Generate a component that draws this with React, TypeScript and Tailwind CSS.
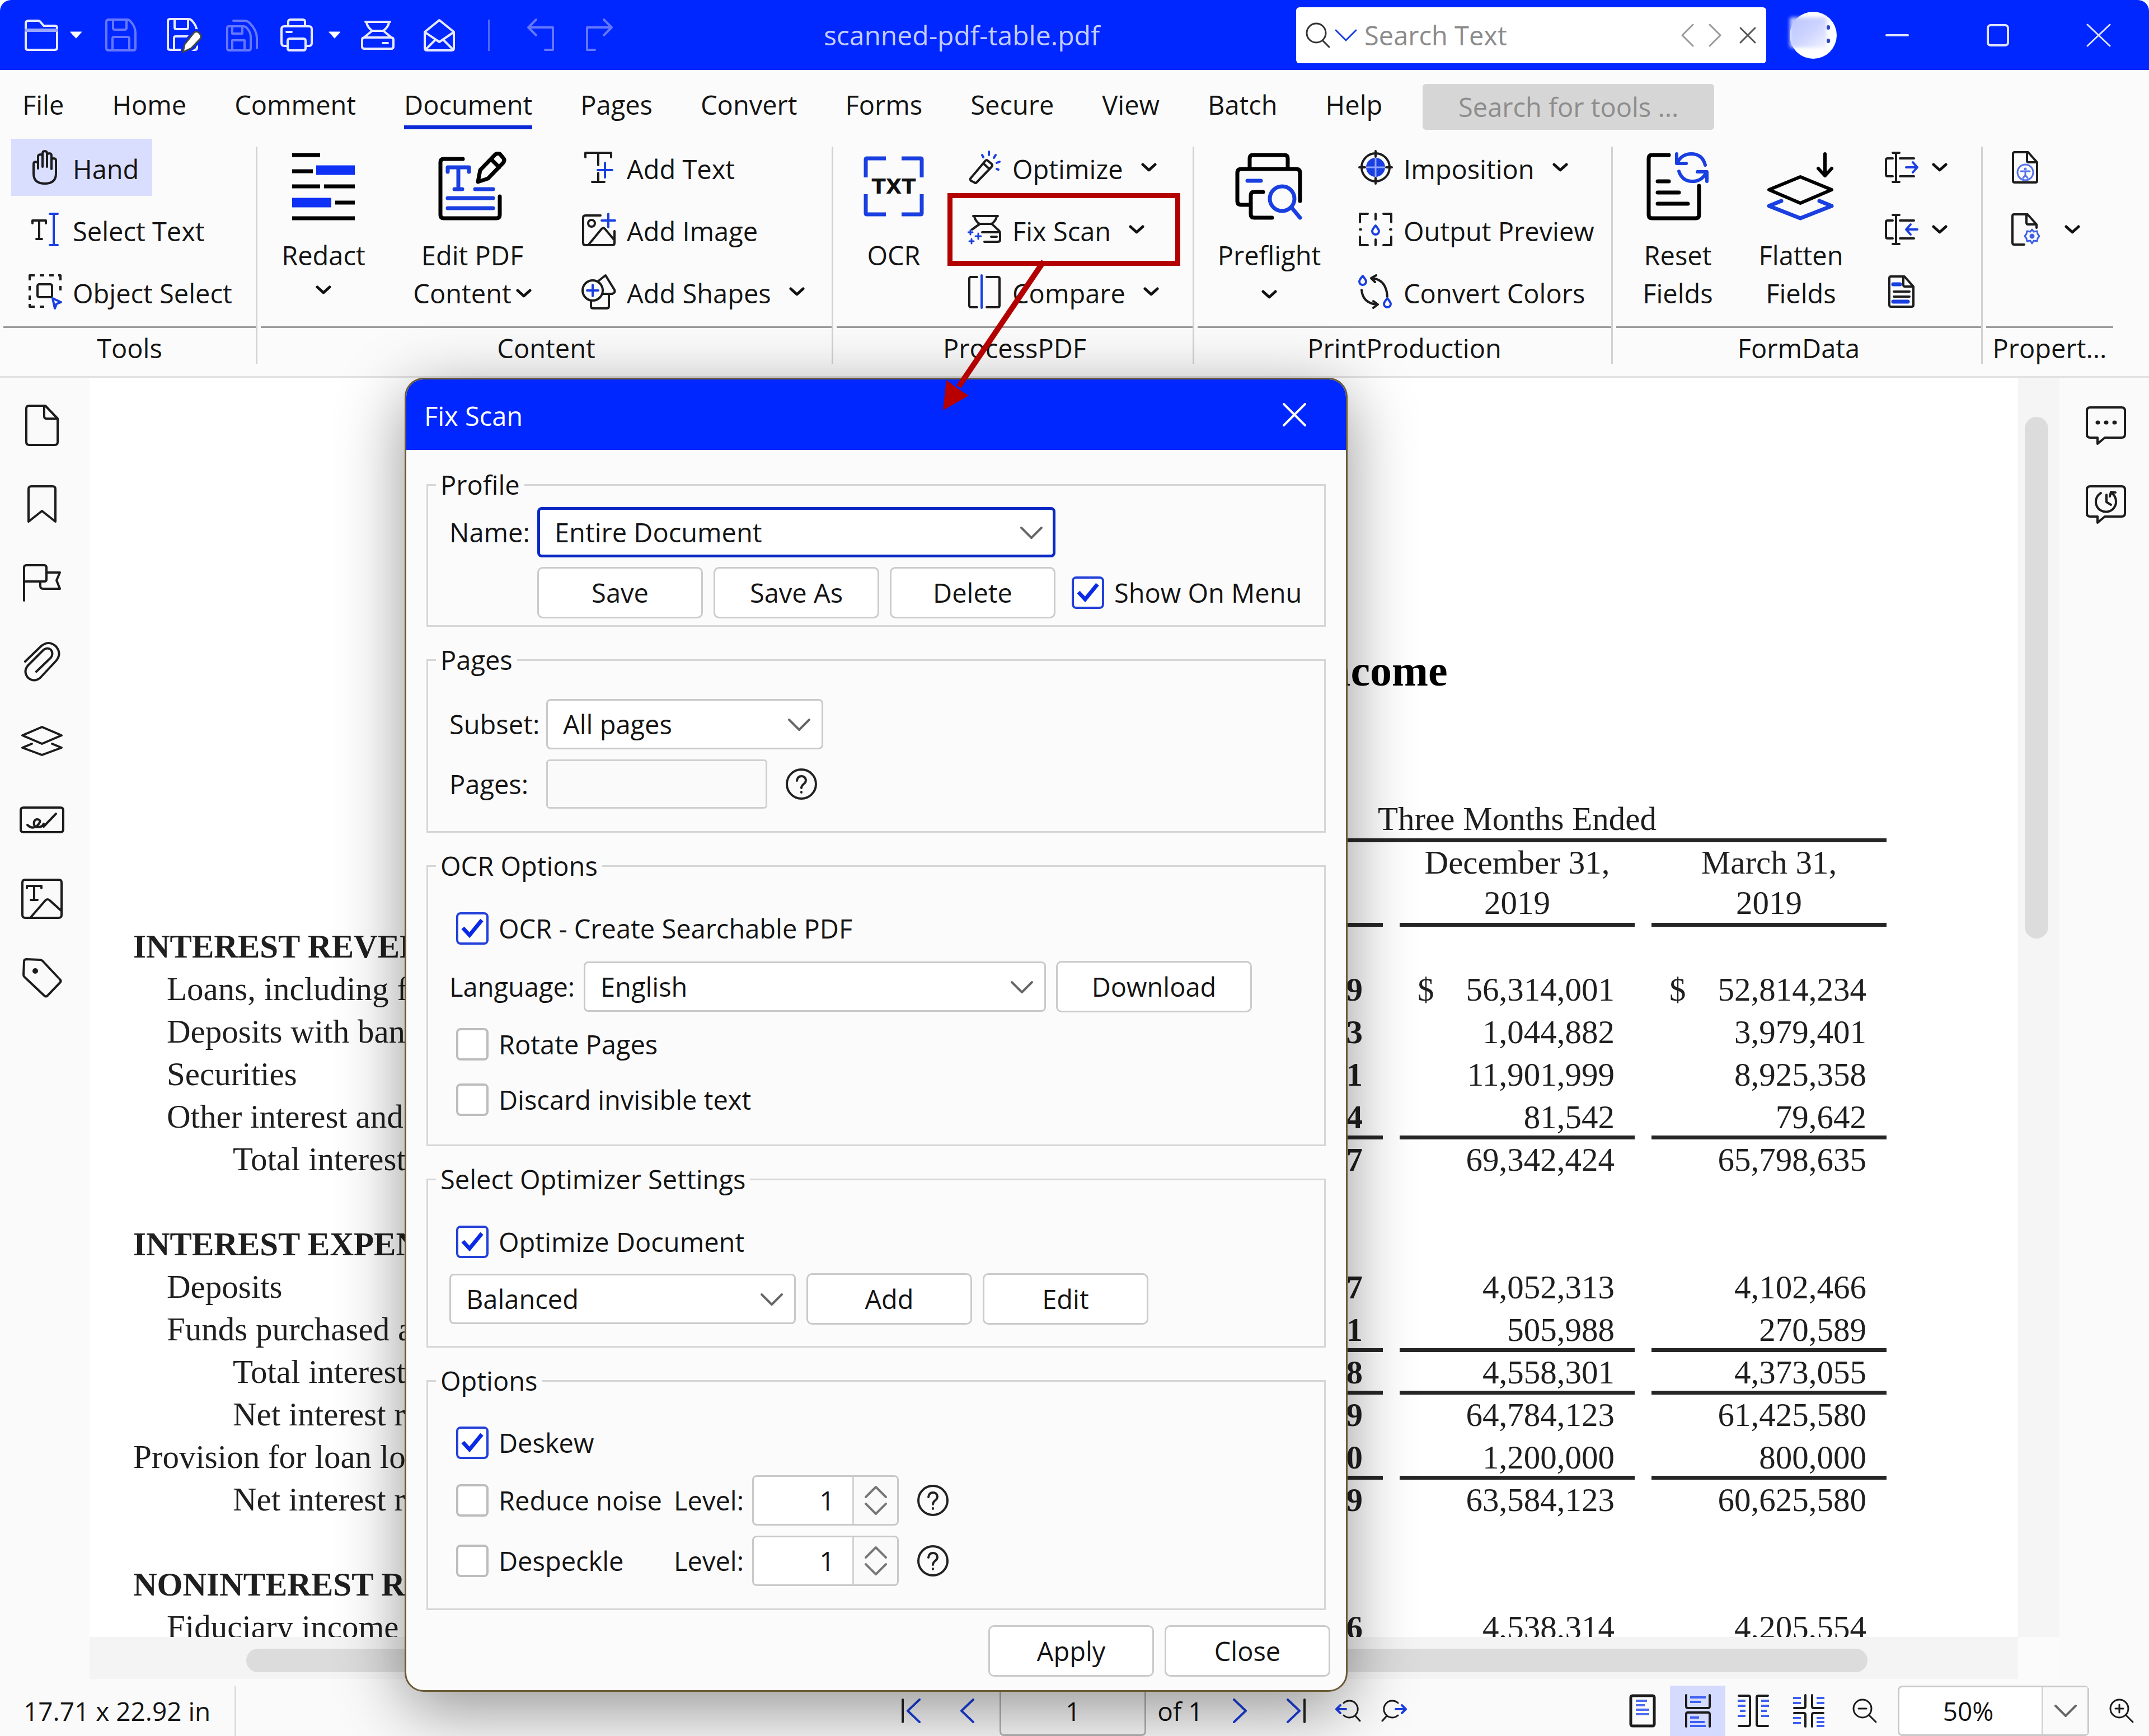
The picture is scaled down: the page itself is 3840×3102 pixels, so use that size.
import React from "react";

const BLUE = "#1a3fe0";
const INK = "#1c1c1c";

type IconProps = {
  w: number;
  h: number;
  sw?: number;
  color?: string;
  children: React.ReactNode;
};

function Icon({ w, h, sw = 4, color = INK, children }: IconProps) {
  return (
    <svg
      width={w}
      height={h}
      viewBox={`0 0 ${w} ${h}`}
      fill="none"
      stroke={color}
      strokeWidth={sw}
      strokeLinecap="round"
      strokeLinejoin="round"
      className="block shrink-0"
      aria-hidden="true"
    >
      {children}
    </svg>
  );
}

function Chevron({ w = 28, h = 16, sw = 5, color = "#111" }: { w?: number; h?: number; sw?: number; color?: string }) {
  return (
    <Icon w={w} h={h} sw={sw} color={color}>
      <path d={`M3 3L${w / 2} ${h - 3}L${w - 3} 3`} />
    </Icon>
  );
}

/* ---------- title bar ---------- */

const floppy = (
  <>
    <path d="M6 3h34q4 0 7 4q8 9 8 20v27q0 4-4 4H7q-4 0-4-4V7q0-4 4-4z" />
    <path d="M15 4v14q0 3 3 3h18q3 0 3-3V4M14 57V37q0-3 3-3h24q3 0 3 3v20" />
  </>
);

function TitleBar() {
  const b = "flex h-full items-center justify-center";
  return (
    <header className="flex h-[125px] shrink-0 items-center rounded-t-[20px] bg-[#0027ff]">
      <div className="flex h-full items-center pl-8">
        <button aria-label="Open" className={`${b} w-[84px]`}>
          <Icon w={62} h={58} color="#e6e9ff">
            <path d="M3 8q0-5 5-5h17q3 0 5 3l5 6h20q4 0 4 4v35q0 4-4 4H7q-4 0-4-4z" />
            <path d="M4 20h54" stroke="#9aa6ff" strokeWidth="6" />
          </Icon>
        </button>
        <button aria-label="Open recent" className={`${b} w-[40px]`}>
          <Icon w={22} h={14} sw={1} color="#fff"><path d="M1 1h20L11 12z" fill="#fff" /></Icon>
        </button>
        <button aria-label="Save" className={`${b} w-[120px]`}>
          <Icon w={58} h={61} color="#6677ff">{floppy}</Icon>
        </button>
        <button aria-label="Save as" className={`${b} w-[106px]`}>
          <Icon w={64} h={64} color="#e6e9ff">
            {floppy}
            <path d="M30 62l3-14 16-20q5-5 10 0t2 10L45 55z" fill="#fff" stroke="#0027ff" strokeWidth="9" />
            <path d="M30 62l3-14 16-20q5-5 10 0t2 10L45 55z" fill="#fff" stroke="#444" strokeWidth="3" />
          </Icon>
        </button>
        <button aria-label="Save all" className={`${b} w-[102px]`}>
          <Icon w={60} h={60} color="#6677ff">
            <path d="M6 14h26q4 0 7 4 6 7 6 15v20q0 4-4 4H6q-3 0-3-4V17q0-3 3-3z" />
            <path d="M12 15v12h18V15M12 56V39h22v17M14 4h20q5 0 9 4 13 13 13 27v18" />
          </Icon>
        </button>
        <button aria-label="Print" className={`${b} w-[92px]`}>
          <Icon w={60} h={61} color="#e6e9ff">
            <path d="M15 15V7q0-4 4-4h22q4 0 4 4v8M14 50H8q-5 0-5-5V20q0-5 5-5h44q5 0 5 5v25q0 5-5 5h-6M12 25h9" />
            <path d="M18 37h24q4 0 4 4v13q0 4-4 4H18q-4 0-4-4V41q0-4 4-4z" />
          </Icon>
        </button>
        <button aria-label="Print options" className={`${b} w-[44px]`}>
          <Icon w={22} h={14} sw={1} color="#fff"><path d="M1 1h20L11 12z" fill="#fff" /></Icon>
        </button>
        <button aria-label="Scan" className={`${b} w-[110px]`}>
          <Icon w={62} h={54} color="#e6e9ff">
            <path d="M9 3h44M11 4q1 8 10 15M51 4q-1 8-10 15M21 19h20M21 19L4 33M41 19l17 14M7 31h48q4 0 4 4v12q0 4-4 4H7q-4 0-4-4V35q0-4 4-4zM40 41h9" />
          </Icon>
        </button>
        <button aria-label="Email" className={`${b} w-[110px]`}>
          <Icon w={60} h={60} color="#e6e9ff">
            <path d="M4 24L30 3l26 21v29q0 4-4 4H8q-4 0-4-4zM5 25l25 17 25-17M6 55l17-17M54 55L37 38" />
          </Icon>
        </button>
        <span className="ml-8 h-14 w-[3px] bg-[#5268ff]" />
        <button aria-label="Undo" className={`${b} ml-9 w-[110px]`}>
          <Icon w={52} h={62} color="#6677ff"><path d="M18 3L4 17l14 14M4 17h44v40H34" /></Icon>
        </button>
        <button aria-label="Redo" className={`${b} w-[100px]`}>
          <Icon w={52} h={62} color="#6677ff"><path d="M34 3l14 14-14 14M48 17H4v40h14" /></Icon>
        </button>
      </div>
      <h1 className="flex-1 text-center text-[48px] leading-[64px] text-[#c3ccff]">scanned-pdf-table.pdf</h1>
      <div className="flex h-[100px] w-[840px] items-center rounded-[6px] bg-white pl-4">
        <Icon w={46} h={48} sw={3} color="#333"><circle cx="20" cy="20" r="17" /><path d="M32 34l11 11" /></Icon>
        <span className="ml-1.5"><Chevron w={42} h={24} sw={3} color={BLUE} /></span>
        <input
          aria-label="Search Text"
          placeholder="Search Text"
          className="ml-3 min-w-0 flex-1 bg-transparent outline-none placeholder:text-[#8b8b8b]"
        />
        <button aria-label="Previous result" className="mr-6">
          <Icon w={26} h={42} sw={3} color="#999"><path d="M23 2L4 21l19 19" /></Icon>
        </button>
        <button aria-label="Next result" className="mr-7">
          <Icon w={26} h={42} sw={3} color="#999"><path d="M3 2l19 19L3 40" /></Icon>
        </button>
        <button aria-label="Clear search" className="mr-4">
          <Icon w={34} h={34} sw={3} color="#555"><path d="M4 4l26 26M30 4L4 30" /></Icon>
        </button>
      </div>
      <div className="relative mr-[18px] ml-[42px] size-[84px] rounded-full bg-white">
        <span className="absolute top-2.5 left-0 h-[54px] w-[66px] rounded-sm bg-linear-to-br from-[#bcc6ff] via-[#ccd3ff] to-[#f1f3ff] blur-[3px]" />
        <span className="absolute top-6 right-3 h-2 w-1.5 rounded-full bg-[#2f45c8]" />
        <span className="absolute top-12 right-3 h-2 w-1.5 rounded-full bg-[#2f45c8]" />
      </div>
      <button aria-label="Minimize" className={`${b} w-[180px]`}>
        <Icon w={42} h={6} color="#dfe4ff"><path d="M2 3h38" /></Icon>
      </button>
      <button aria-label="Maximize" className={`${b} w-[180px]`}>
        <Icon w={42} h={42} color="#dfe4ff"><rect x="3" y="3" width="36" height="36" rx="5" /></Icon>
      </button>
      <button aria-label="Close window" className={`${b} w-[180px]`}>
        <Icon w={44} h={42} sw={3} color="#dfe4ff"><path d="M2 2l40 38M42 2L2 40" /></Icon>
      </button>
    </header>
  );
}

/* ---------- menu tabs ---------- */

const tabs = ["File", "Home", "Comment", "Document", "Pages", "Convert", "Forms", "Secure", "View", "Batch", "Help"];

function MenuTabs() {
  return (
    <nav className="flex h-[115px] shrink-0 items-center pl-10">
      <div className="flex gap-[86px] pt-1.5">
        {tabs.map((t) => (
          <button
            key={t}
            className={
              t === "Document"
                ? "border-b-[7px] border-[#0b2ad6] pt-2.5 leading-[74px]"
                : "border-b-[7px] border-transparent pt-2.5 leading-[74px]"
            }
          >
            {t}
          </button>
        ))}
      </div>
      <input
        aria-label="Search for tools"
        placeholder="Search for tools ..."
        className="mt-4 ml-[72px] h-[82px] w-[521px] rounded-[6px] bg-[#d6d6d6] text-center outline-none placeholder:text-[#8d8d8d]"
      />
    </nav>
  );
}

/* ---------- ribbon ---------- */

function Tool({
  icon,
  label,
  name,
  chevron,
  active,
  children,
}: {
  icon: React.ReactNode;
  label?: string;
  name?: string;
  chevron?: boolean;
  active?: boolean;
  children?: React.ReactNode;
}) {
  return (
    <button
      aria-label={label ? undefined : name}
      className={
        active
          ? "relative flex h-[102px] items-center self-start bg-[#d9deff] pr-6 pl-[30px] whitespace-nowrap"
          : "relative flex h-[102px] items-center self-start pl-[30px] whitespace-nowrap"
      }
    >
      <span className="flex w-[60px] justify-center">{icon}</span>
      {label && <span className="ml-5 pt-1.5">{label}</span>}
      {chevron && <span className={label ? "ml-8" : "ml-6"}><Chevron /></span>}
      {children}
    </button>
  );
}

function BigTool({ icon, children, width }: { icon: React.ReactNode; children: React.ReactNode; width: string }) {
  return (
    <button className={`flex flex-col items-center self-start pt-[23px] ${width}`}>
      <span className="flex h-[124px] items-center">{icon}</span>
      <span className="mt-[27px] flex flex-col items-center leading-[68px]">{children}</span>
    </button>
  );
}

function Group({ title, children, pad, last }: { title: string; children: React.ReactNode; pad: string; last?: boolean }) {
  return (
    <section aria-label={title} className={last ? "mr-[64px] flex min-w-0" : "flex min-w-0"}>
      <div className="flex min-w-0 flex-1 flex-col pl-1.5">
        <div className={`flex h-[346px] border-b-[3px] border-[#9c9c9c] pt-2 ${pad}`}>{children}</div>
        <div className="h-[72px] text-center leading-[72px] whitespace-nowrap">{title}</div>
      </div>
      {!last && <span className="mt-[22px] mb-2 w-[3px] bg-[#d2d2d2]" />}
    </section>
  );
}

const list = "flex flex-col gap-[9px]";

function formFieldIcon(arrow: string) {
  return (
    <Icon w={60} h={60}>
      <path d="M14 4h12M20 4v52M14 56h12M14 14H5q-3 0-3 3v26q0 3 3 3h9M27 14h25M27 46h25" />
      <path d={arrow} stroke={BLUE} />
    </Icon>
  );
}

function Ribbon() {
  return (
    <div className="grid shrink-0 grid-cols-[460fr_1029fr_645fr_748fr_661fr_297fr] border-b-[3px] border-[#e2e2e2] pb-3.5">
      <Group title="Tools" pad="pl-3.5">
        <div className={list}>
          <Tool
            active
            label="Hand"
            icon={
              <Icon w={50} h={66}>
                <path d="M5 38V27q0-4 4-4t4 4v8V14q0-4 4-4t4 4v18V8q0-4 4-4t4 4v24V12q0-4 4-4t4 4v24V21q0-4 4-4t4 4v23q0 18-20 18T5 44z" />
              </Icon>
            }
          />
          <Tool
            label="Select Text"
            icon={
              <Icon w={52} h={62}>
                <path d="M4 20v-5h24v5M16 15v33M11 48h10" />
                <path d="M35 3h14M42 3v56M35 59h14" stroke={BLUE} />
              </Icon>
            }
          />
          <Tool
            label="Object Select"
            icon={
              <Icon w={62} h={64}>
                <path d="M4 12V3h9M22 3h8M39 3h8M55 3h4v9M59 22v8M4 22v8M4 39v8M4 54v5h9M22 59h8" strokeLinecap="butt" />
                <rect x="18" y="19" width="26" height="23" rx="3" />
                <path d="M45 44l15 7-8 3-3 8z" stroke={BLUE} />
              </Icon>
            }
          />
        </div>
      </Group>

      <Group title="Content" pad="pl-3 gap-[22px]">
        <BigTool
          width="w-[200px]"
          icon={
            <Icon w={112} h={122} sw={7} color="#000">
              <path d="M0 5h50M0 34h37M0 61h50M57 61h55M77 90h35M0 118h112" strokeLinecap="butt" />
              <path d="M43 32h69M0 90h70" stroke="#0f30f5" strokeWidth="17" strokeLinecap="butt" />
            </Icon>
          }
        >
          <span>Redact</span>
          <span className="pt-5"><Chevron /></span>
        </BigTool>
        <BigTool
          width="w-[288px]"
          icon={
            <Icon w={122} h={124} sw={7} color="#000">
              <path d="M44 13H10q-6 0-6 6v94q0 6 6 6h94q6 0 6-6V80" />
              <path d="M71 54l4-21 27-28q5-4 9 0l5 6q4 4 0 9L89 48zM95 14l14 14" />
              <path d="M17 36v-8h38v8M36 28v38M29 67h14M66 67h32M17 83h81M17 101h81" stroke={BLUE} />
            </Icon>
          }
        >
          <span>Edit PDF</span>
          <span className="flex items-center gap-2">Content<Chevron /></span>
        </BigTool>
        <div className={list}>
          <Tool
            label="Add Text"
            icon={
              <Icon w={56} h={60}>
                <path d="M4 12V4h46v8M27 4v22M27 40v15M16 56h22" />
                <path d="M39 22v26M26 35h26" stroke={BLUE} />
              </Icon>
            }
          />
          <Tool
            label="Add Image"
            icon={
              <Icon w={62} h={62}>
                <path d="M34 6H7q-4 0-4 4v45q0 4 4 4h48q4 0 4-4V34M12 59l24-29q3-3 6 0l15 18" />
                <circle cx="18" cy="20" r="6" />
                <path d="M48 3v24M36 15h24" stroke={BLUE} />
              </Icon>
            }
          />
          <Tool
            label="Add Shapes"
            chevron
            icon={
              <Icon w={64} h={64}>
                <circle cx="21" cy="30" r="18" />
                <path d="M30 14L44 3l16 26q2 5-4 7H40M18 49v9q0 4 4 4h24q4 0 4-4V37" />
                <path d="M21 20v20M11 30h20" stroke={BLUE} />
              </Icon>
            }
          />
        </div>
      </Group>

      <Group title="ProcessPDF" pad="pl-3 gap-3">
        <BigTool
          width="w-[180px]"
          icon={
            <svg width="108" height="108" viewBox="0 0 108 108" fill="none" aria-hidden="true">
              <path
                d="M4 38V6q0-2 2-2h34M68 4h34q2 0 2 2v32M104 68v34q0 2-2 2H68M40 104H6q-2 0-2-2V68"
                stroke={BLUE}
                strokeWidth="7"
              />
              <text x="54" y="67" textAnchor="middle" className="font-['DejaVu_Sans'] text-[37px] font-bold" fill="#111">
                TXT
              </text>
            </svg>
          }
        >
          <span>OCR</span>
        </BigTool>
        <div className={list}>
          <Tool
            label="Optimize"
            chevron
            icon={
              <Icon w={60} h={60}>
                <path d="M5 50l27-32q2-2 4 0l7 6q2 2 0 5L16 57q-2 2-4 0l-6-3q-2-2-1-4zM28 23l10 9" />
                <path d="M26 8l2 4M38 2v6M50 8l-3 5M57 20l-5 2M52 33l3 1" stroke={BLUE} />
              </Icon>
            }
          />
          <Tool
            label="Fix Scan"
            chevron
            icon={
              <Icon w={60} h={54}>
                <path d="M10 3h44M12 4q2 8 9 13M52 4q-2 8-9 13M22 17h21M22 17L8 27M43 17l13 12q2 2 2 5v11q0 4-4 4H30M26 32h30M42 40h10" />
                <path d="M5 28v8M1 32h8M19 34v10M14 39h10M7 44v8M3 48h8" stroke={BLUE} strokeWidth="3" />
              </Icon>
            }
          >
            <span className="absolute -top-[14px] -left-[6px] z-40 h-[130px] w-[416px] border-[9px] border-[#b30000]" />
            <svg
              className="absolute top-[108px] -left-[24px] z-40 overflow-visible"
              width="200"
              height="270"
              viewBox="0 0 200 270"
              aria-hidden="true"
            >
              <path d="M190 0L38 224" stroke="#b30000" strokeWidth="10" />
              <path d="M10 266L16 212L34 226L56 240Z" fill="#b80000" />
            </svg>
          </Tool>
          <Tool
            label="Compare"
            chevron
            icon={
              <Icon w={60} h={62}>
                <path d="M17 5H6q-3 0-3 3v48q0 3 3 3h11M34 5h20q3 0 3 3v48q0 3-3 3H34" />
                <path d="M25 2v58" stroke={BLUE} />
              </Icon>
            }
          />
        </div>
      </Group>

      <Group title="PrintProduction" pad="pl-3.5 gap-4">
        <BigTool
          width="w-[228px]"
          icon={
            <Icon w={122} h={120} sw={7} color="#000">
              <path d="M26 29V10q0-6 6-6h56q6 0 6 6v19M24 93H11q-7 0-7-7V36q0-7 7-7h98q7 0 7 7v50M50 70H34q-6 0-6 6v34q0 6 6 6h32" />
              <path d="M22 50h24M101 98l15 18" stroke={BLUE} />
              <circle cx="84" cy="82" r="22" stroke={BLUE} />
            </Icon>
          }
        >
          <span>Preflight</span>
          <span className="pt-7"><Chevron /></span>
        </BigTool>
        <div className={list}>
          <Tool
            label="Imposition"
            chevron
            icon={
              <Icon w={62} h={62}>
                <circle cx="31" cy="31" r="25" />
                <circle cx="31" cy="31" r="17" fill={BLUE} stroke="none" />
                <path d="M31 15v32M15 31h32" stroke="#8fa3ff" strokeWidth="3" />
                <path d="M31 2v10M31 50v10M2 31h10M50 31h10" />
              </Icon>
            }
          />
          <Tool
            label="Output Preview"
            icon={
              <Icon w={62} h={62}>
                <path d="M3 18V3h14M45 3h14v15M59 44v15H45M17 59H3V44M31 3v10M31 49v10M3 31h2M57 31h2" />
                <path d="M31 24q6 7 6 10a6 6 0 0 1-12 0q0-3 6-10z" stroke={BLUE} />
              </Icon>
            }
          />
          <Tool
            label="Convert Colors"
            icon={
              <Icon w={62} h={62}>
                <path d="M24 7q26 2 28 33M32 2l-9 5 7 7M6 28q2 24 28 26M27 48l8 6-8 6" />
                <path d="M8 3q6 7 6 10a6 6 0 0 1-12 0q0-3 6-10zM52 43q6 7 6 10a6 6 0 0 1-12 0q0-3 6-10z" stroke={BLUE} />
              </Icon>
            }
          />
        </div>
      </Group>

      <Group title="FormData" pad="pl-2.5 gap-5">
        <BigTool
          width="w-[200px]"
          icon={
            <Icon w={112} h={122} sw={7} color="#000">
              <path d="M40 5H10q-6 0-6 6v101q0 6 6 6h78q6 0 6-6V60M20 52h20M20 72h38M20 92h54" />
              <path d="M54 3v17h17M55 19q8-16 25-16 20 0 25 20M108 52V35H91M107 36q-8 16-25 16-18 0-24-18" stroke={BLUE} strokeWidth="6" />
            </Icon>
          }
        >
          <span>Reset</span>
          <span>Fields</span>
        </BigTool>
        <BigTool
          width="w-[200px]"
          icon={
            <Icon w={122} h={122} sw={6} color="#000">
              <path d="M104 3v38M92 29l12 13 12-13M60 44l56 23-56 24L4 67z" />
              <path d="M26 87L4 96l56 22 56-22-22-9" stroke={BLUE} strokeWidth="7" />
            </Icon>
          }
        >
          <span>Flatten</span>
          <span>Fields</span>
        </BigTool>
        <div className={list}>
          <Tool name="Export form data" chevron icon={formFieldIcon("M38 30h20M50 21l8 9-8 9")} />
          <Tool name="Import form data" chevron icon={formFieldIcon("M38 30h20M46 21l-8 9 8 9")} />
          <Tool
            name="Form report"
            icon={
              <Icon w={50} h={60}>
                <path d="M6 3h24l16 18v33q0 3-3 3H6q-3 0-3-3V6q0-3 3-3zM28 4v14q0 3 3 3h14M11 30h28M11 39h28" />
                <path d="M10 17h12M10 48h26" stroke={BLUE} strokeWidth="7" />
              </Icon>
            }
          />
        </div>
      </Group>

      <Group title="Propert..." pad="pl-2.5" last>
        <div className={list}>
          <Tool
            name="Document properties"
            icon={
              <Icon w={50} h={60}>
                <path d="M6 3h24l16 18v33q0 3-3 3H6q-3 0-3-3V6q0-3 3-3zM28 4v14q0 3 3 3h14" />
                <g stroke="#5571ee" strokeWidth="3">
                  <circle cx="25" cy="39" r="14" />
                  <circle cx="25" cy="33" r="1" />
                  <path d="M17 37h16M25 38v6l-4 5M25 44l4 5" />
                </g>
              </Icon>
            }
          />
          <button aria-label="Property settings" className="flex h-[102px] items-center gap-10 pl-[30px]">
            <span className="flex w-[60px] justify-center">
              <Icon w={52} h={60}>
                <path d="M24 57H6q-3 0-3-3V6q0-3 3-3h24l16 18v6M28 4v14q0 3 3 3h14" />
                <g stroke="#3f5fe8" strokeWidth="3">
                  <path d="M38 30l3 4 6-1 1 5 3 4-3 4-1 5-6-1-3 5-3-5-6 1-1-5-3-4 3-4 1-5 6 1z" />
                  <circle cx="38" cy="42" r="3" fill="#3f5fe8" />
                </g>
              </Icon>
            </span>
            <Chevron />
          </button>
        </div>
      </Group>
    </div>
  );
}

/* ---------- side panels ---------- */

const sideIcons: [string, React.ReactNode][] = [
  ["Thumbnails", <Icon w={62} h={76} key="a"><path d="M8 3h29l22 23v42q0 5-5 5H8q-5 0-5-5V8q0-5 5-5zM35 4v18q0 4 4 4h19" /></Icon>],
  ["Bookmarks", <Icon w={54} h={70} key="b"><path d="M3 66V8q0-5 5-5h38q5 0 5 5v58L27 47z" /></Icon>],
  ["Destinations", <Icon w={72} h={70} key="c"><path d="M4 66V7q0-4 4-4h32q4 0 4 4v21q0 4-4 4H4M44 16h24l-6 14 6 15H38q-5 0-5-5v-8" /></Icon>],
  ["Attachments", <Icon w={68} h={74} key="d"><path d="M4 36L32 9q14-12 27 0 11 13 0 26L31 65q-11 9-22 0-9-11 0-22l28-28q7-5 13 0 5 7 0 14L24 54" /></Icon>],
  ["Layers", <Icon w={76} h={56} key="e"><path d="M38 3l35 15-35 15L3 18zM20 33L3 40l35 13 35-13-17-7" /></Icon>],
  ["Signatures", <Icon w={82} h={50} key="f"><path d="M8 3h66q5 0 5 5v34q0 5-5 5H8q-5 0-5-5V8q0-5 5-5zM15 34q8 8 17 2 8-8 4-11-6-3-9 3-2 10 7 10 8 0 10-6M44 37L66 14" /></Icon>],
  ["Fields", <Icon w={76} h={74} key="g"><path d="M8 3h60q5 0 5 5v58q0 5-5 5H8q-5 0-5-5V8q0-5 5-5zM11 18v-4h26v4M24 14v25M18 39h12M18 70l26-30q4-4 8 0l20 18" /></Icon>],
  ["Tags", <Icon w={74} h={74} key="h"><path d="M5 8q0-4 4-4l24 1q3 0 5 2l31 33q3 3 0 6L47 69q-3 3-6 0L6 36q-2-2-2-4z" /><circle cx="25" cy="25" r="3" fill="#111" /></Icon>],
];

const sideButton = "flex h-[141px] w-[150px] items-center justify-center";

function LeftPanel() {
  return (
    <aside className="w-[160px] shrink-0 bg-[#fafafa] pt-3.5">
      {sideIcons.map(([name, icon]) => (
        <button key={name} aria-label={name} className={sideButton}>{icon}</button>
      ))}
    </aside>
  );
}

function RightPanel() {
  return (
    <aside className="w-[160px] shrink-0 bg-[#fafafa] pt-3.5 pl-2">
      <button aria-label="Comments" className={sideButton}>
        <Icon w={74} h={72}>
          <path d="M9 4h56q6 0 6 6v42q0 6-6 6H35L22 69V58H9q-6 0-6-6V10q0-6 6-6z" />
          <path d="M22 31h1M37 31h1M52 31h1" strokeWidth="7" />
        </Icon>
      </button>
      <button aria-label="Version history" className={sideButton}>
        <Icon w={74} h={72}>
          <path d="M9 4h56q6 0 6 6v42q0 6-6 6H35L22 69V58H9q-6 0-6-6V10q0-6 6-6z" />
          <path d="M46 15q9 6 9 16a18 18 0 1 1-27-15M38 19v13l8 5M44 22l2-8 8 1" />
        </Icon>
      </button>
    </aside>
  );
}

/* ---------- document ---------- */

type Row = {
  label?: string;
  level?: "head" | "flush" | "item" | "total";
  values?: [string, string, string];
  dollar?: boolean;
  rule?: boolean;
};

const rows: Row[] = [
  { label: "INTEREST REVENUE", level: "head" },
  { label: "Loans, including fees", level: "item", values: ["9", "56,314,001", "52,814,234"], dollar: true },
  { label: "Deposits with banks", level: "item", values: ["3", "1,044,882", "3,979,401"] },
  { label: "Securities", level: "item", values: ["1", "11,901,999", "8,925,358"] },
  { label: "Other interest and dividends", level: "item", values: ["4", "81,542", "79,642"], rule: true },
  { label: "Total interest revenue", level: "total", values: ["7", "69,342,424", "65,798,635"] },
  {},
  { label: "INTEREST EXPENSE", level: "head" },
  { label: "Deposits", level: "item", values: ["7", "4,052,313", "4,102,466"] },
  { label: "Funds purchased and other", level: "item", values: ["1", "505,988", "270,589"], rule: true },
  { label: "Total interest expense", level: "total", values: ["8", "4,558,301", "4,373,055"], rule: true },
  { label: "Net interest revenue", level: "total", values: ["9", "64,784,123", "61,425,580"] },
  { label: "Provision for loan losses", level: "flush", values: ["0", "1,200,000", "800,000"], rule: true },
  { label: "Net interest revenue after provision", level: "total", values: ["9", "63,584,123", "60,625,580"] },
  {},
  { label: "NONINTEREST REVENUE", level: "head" },
  { label: "Fiduciary income", level: "item", values: ["6", "4,538,314", "4,205,554"] },
];

const labelStyle = {
  head: "p-0 pb-1.5 text-left font-bold",
  flush: "p-0 pb-1.5 text-left font-normal",
  item: "p-0 pb-1.5 pl-[60px] text-left font-normal",
  total: "p-0 pb-1.5 pl-[178px] text-left font-normal",
};

function DocumentPage() {
  return (
    <div className="min-w-0 flex-1 overflow-hidden bg-white pr-[205px] pl-12 font-['Liberation_Serif',serif] text-[59px] text-[#1f1f1f]">
      <h2 className="mt-[474px] text-center text-[78px] leading-[100px] font-bold text-black">
        Condensed Consolidated Statements of Income
      </h2>
      <table className="mt-[179px] w-full table-fixed border-separate border-spacing-x-[30px] border-spacing-y-0 whitespace-nowrap">
        <colgroup>
          <col />
          <col className="w-[420px]" />
          <col className="w-[420px]" />
          <col className="w-[420px]" />
        </colgroup>
        <thead>
          <tr>
            <td />
            <th colSpan={3} className="border-b-[7px] border-[#262626] p-0 leading-[70px] font-normal">Three Months Ended</th>
          </tr>
          <tr className="leading-[72px]">
            <td />
            <th className="border-b-[7px] border-[#262626] p-0 font-bold">March 31,<br />2020</th>
            <th className="border-b-[7px] border-[#262626] p-0 font-normal">December 31,<br />2019</th>
            <th className="border-b-[7px] border-[#262626] p-0 font-normal">March 31,<br />2019</th>
          </tr>
        </thead>
        <tbody className="leading-[63px]">
          {rows.map((r, i) => (
            <tr key={i} className="h-[76px]">
              {r.label ? (
                <th scope="row" className={labelStyle[r.level ?? "item"]}>{r.label}</th>
              ) : (
                <td className="p-0" />
              )}
              {[0, 1, 2].map((c) => (
                <td
                  key={c}
                  className={`border-b-[7px] pt-1 pr-9 pb-0 pl-8 ${r.rule ? "border-[#262626]" : "border-transparent"} ${c === 0 ? "font-bold" : ""}`}
                >
                  <div className="flex justify-between">
                    <span>{r.dollar ? "$" : ""}</span>
                    <span>{r.values ? r.values[c] : ""}</span>
                  </div>
                </td>
              ))}
            </tr>
          ))}
        </tbody>
      </table>
    </div>
  );
}

/* ---------- dialog ---------- */

function Check({ label, checked }: { label: string; checked?: boolean }) {
  return (
    <label className="flex h-[57px] items-center gap-[18px] whitespace-nowrap">
      <span className="relative size-[58px] shrink-0">
        <input
          type="checkbox"
          defaultChecked={checked}
          className="peer block size-[58px] appearance-none rounded-[8px] border-4 border-[#bdbdbd] bg-white checked:border-[#2340d8]"
        />
        <svg
          width="58"
          height="58"
          viewBox="0 0 58 58"
          fill="none"
          className="pointer-events-none absolute inset-0 hidden peer-checked:block"
          aria-hidden="true"
        >
          <path d="M12 28l12 13L46 14" stroke="#0b2ae6" strokeWidth="7" />
        </svg>
      </span>
      <span>{label}</span>
    </label>
  );
}

function Select({ id, value, width, focus }: { id: string; value: string; width: string; focus?: boolean }) {
  return (
    <div className={`relative ${width}`}>
      <select
        id={id}
        aria-label={value}
        className={
          focus
            ? "h-[90px] w-full appearance-none rounded-[8px] border-[5px] border-[#0a28c4] bg-white pl-[26px] outline-none"
            : "h-[90px] w-full appearance-none rounded-[8px] border-[3px] border-[#c9c9c9] bg-white pl-[27px] outline-none"
        }
      >
        <option>{value}</option>
      </select>
      <span className="pointer-events-none absolute top-[34px] right-[22px]"><Chevron w={42} h={24} sw={4} color="#666" /></span>
    </div>
  );
}

function Btn({ children, width = "w-[296px]" }: { children: React.ReactNode; width?: string }) {
  return (
    <button className={`h-[92px] rounded-[10px] border-[3px] border-[#cbcbcb] bg-white ${width}`}>{children}</button>
  );
}

function Help() {
  return (
    <button aria-label="Help" className="ml-8">
      <Icon w={58} h={58} sw={4} color="#222">
        <circle cx="29" cy="29" r="26" />
        <path d="M21 23q1-8 8-8t8 7q0 4-4 7t-4 7M29 43v1" />
      </Icon>
    </button>
  );
}

function Spin({ id }: { id: string }) {
  return (
    <div className="flex h-[90px] w-[262px] overflow-hidden rounded-[8px] border-[3px] border-[#c9c9c9] bg-white">
      <input
        id={id}
        type="number"
        defaultValue={1}
        className="min-w-0 flex-1 [appearance:textfield] pr-8 text-right outline-none [&::-webkit-inner-spin-button]:appearance-none"
      />
      <div className="flex w-[80px] flex-col items-center justify-center gap-1.5 border-l-[3px] border-[#d4d4d4] bg-[#fafafa]">
        <button aria-label="Increase level"><Icon w={42} h={24} sw={4} color="#777"><path d="M3 21L21 3l18 18" /></Icon></button>
        <button aria-label="Decrease level"><Icon w={42} h={24} sw={4} color="#777"><path d="M3 3l18 18L39 3" /></Icon></button>
      </div>
    </div>
  );
}

function Field({ title, className, children }: { title: string; className: string; children: React.ReactNode }) {
  return (
    <fieldset className={`border-[3px] border-[#d6d6d6] px-[38px] ${className}`}>
      <legend className="-ml-6 px-2 leading-[64px]">{title}</legend>
      {children}
    </fieldset>
  );
}

function FixScanDialog() {
  return (
    <div
      role="dialog"
      aria-label="Fix Scan"
      className="absolute top-[675px] left-[723px] z-30 w-[1685px] overflow-hidden rounded-[34px] border-[3px] border-[#6a5a34] bg-[#fbfbfb] shadow-[0_30px_120px_rgba(0,0,0,0.42)]"
    >
      <div className="flex h-[126px] items-center justify-between bg-[#0027ff] pr-[70px] pl-8 text-white">
        <h2 className="pt-1">Fix Scan</h2>
        <button aria-label="Close dialog">
          <Icon w={44} h={44} sw={4} color="#fff"><path d="M3 3l38 38M41 3L3 41" /></Icon>
        </button>
      </div>
      <div className="flex flex-col gap-[27px] px-[36px] pt-[30px] pb-6">
        <Field title="Profile" className="pt-2 pb-3">
          <div className="grid grid-cols-[157px_auto] gap-y-[17px]">
            <label htmlFor="profile-name" className="self-center">Name:</label>
            <Select id="profile-name" value="Entire Document" width="w-[926px]" focus />
            <div className="col-start-2 flex items-center gap-[19px]">
              <Btn>Save</Btn>
              <Btn>Save As</Btn>
              <Btn>Delete</Btn>
              <div className="ml-2.5"><Check label="Show On Menu" checked /></div>
            </div>
          </div>
        </Field>

        <Field title="Pages" className="pt-[38px] pb-[40px]">
          <div className="grid grid-cols-[173px_auto] items-center gap-y-[18px]">
            <label htmlFor="page-subset">Subset:</label>
            <Select id="page-subset" value="All pages" width="w-[495px]" />
            <label htmlFor="page-range">Pages:</label>
            <div className="flex items-center">
              <input id="page-range" className="h-[88px] w-[395px] rounded-[6px] border-[3px] border-[#cfcfcf] bg-[#fafafa]" />
              <Help />
            </div>
          </div>
        </Field>

        <Field title="OCR Options" className="pt-[51px] pb-[52px]">
          <div className="pl-3"><Check label="OCR - Create Searchable PDF" checked /></div>
          <div className="mt-[30px] mb-[28px] flex items-center">
            <label htmlFor="ocr-language" className="w-[240px]">Language:</label>
            <Select id="ocr-language" value="English" width="w-[826px]" />
            <span className="ml-[18px]"><Btn width="w-[350px]">Download</Btn></span>
          </div>
          <div className="flex flex-col gap-[42px] pl-3">
            <Check label="Rotate Pages" />
            <Check label="Discard invisible text" />
          </div>
        </Field>

        <Field title="Select Optimizer Settings" className="pt-[51px] pb-[38px]">
          <div className="pl-3"><Check label="Optimize Document" checked /></div>
          <div className="mt-[28px] flex items-center gap-[19px]">
            <Select id="optimizer" value="Balanced" width="w-[619px]" />
            <Btn>Add</Btn>
            <Btn>Edit</Btn>
          </div>
        </Field>

        <Field title="Options" className="pt-[50px] pb-[40px]">
          <div className="pl-3"><Check label="Deskew" checked /></div>
          <div className="mt-[30px] grid grid-cols-[401px_140px_auto] items-center gap-y-[18px]">
            <div className="pl-3"><Check label="Reduce noise" /></div>
            <label htmlFor="noise-level">Level:</label>
            <div className="flex items-center"><Spin id="noise-level" /><Help /></div>
            <div className="pl-3"><Check label="Despeckle" /></div>
            <label htmlFor="despeckle-level">Level:</label>
            <div className="flex items-center"><Spin id="despeckle-level" /><Help /></div>
          </div>
        </Field>

        <div className="-mr-2 flex justify-end gap-[19px]">
          <Btn>Apply</Btn>
          <Btn>Close</Btn>
        </div>
      </div>
    </div>
  );
}

/* ---------- status bar ---------- */

function StatusBar() {
  const nav = "flex h-full w-[100px] items-center justify-center";
  const view = "flex h-full w-[99px] items-center justify-center";
  return (
    <footer className="flex h-[102px] shrink-0 items-center bg-[#fafafa] text-[46px]">
      <div className="flex h-full w-[41.1%] items-center pt-3">
        <span className="flex h-full w-[422px] items-center border-r-[3px] border-[#dcdcdc] pl-[42px]">17.71 x 22.92 in</span>
      </div>
      <div className="flex h-full items-center pt-3">
        <button aria-label="First page" className={nav}>
          <Icon w={36} h={44} color="#222"><path d="M3 2v40" /><path d="M33 2L12 22l21 20" stroke={BLUE} /></Icon>
        </button>
        <button aria-label="Previous page" className={nav}>
          <Icon w={28} h={44} color={BLUE}><path d="M25 2L4 22l21 20" /></Icon>
        </button>
        <input
          aria-label="Page"
          defaultValue="1"
          className="ml-2 h-full w-[262px] rounded-b-[8px] border-[3px] border-[#b4b4b4] bg-transparent text-center"
        />
        <span className="ml-5 w-[84px] whitespace-nowrap">of 1</span>
        <button aria-label="Next page" className={`${nav} ml-3.5`}>
          <Icon w={28} h={44} color={BLUE}><path d="M3 2l21 20L3 42" /></Icon>
        </button>
        <button aria-label="Last page" className={nav}>
          <Icon w={36} h={44} color="#222"><path d="M33 2v40" /><path d="M3 2l21 20L3 42" stroke={BLUE} /></Icon>
        </button>
        <button aria-label="Previous view" className="ml-5 w-[82px]">
          <Icon w={46} h={42} sw={3}>
            <path d="M15 7a15 15 0 1 1 0 22M36 30l8 9" />
            <path d="M3 18h16M9 11l-7 7 7 7" stroke={BLUE} strokeWidth="4" />
          </Icon>
        </button>
        <button aria-label="Next view" className="w-[82px]">
          <Icon w={46} h={42} sw={3}>
            <path d="M30 7a15 15 0 1 0 0 22M10 30l-8 9" />
            <path d="M26 18h17M37 11l7 7-7 7" stroke={BLUE} strokeWidth="4" />
          </Icon>
        </button>
      </div>
      <div className="ml-auto flex h-full items-center pt-3">
        <button aria-label="Single page" className={view}>
          <Icon w={48} h={60} sw={5}>
            <rect x="3" y="3" width="42" height="54" rx="3" />
            <path d="M12 12h20M12 20h16M12 28h24M12 36h24" stroke="#4f6cf0" strokeWidth="4" strokeLinecap="butt" />
          </Icon>
        </button>
        <button aria-label="Continuous" className={`${view} bg-[#d5dbff]`}>
          <Icon w={48} h={60}>
            <path d="M3 2v20q0 3 3 3h36q3 0 3-3V2M3 58V36q0-3 3-3h36q3 0 3 3v22" />
            <path d="M10 6h28M10 14h20M10 42h16M10 50h26M10 57h28" stroke="#3f60f0" strokeLinecap="butt" />
          </Icon>
        </button>
        <button aria-label="Facing" className={view}>
          <Icon w={60} h={60}>
            <path d="M4 3h17q3 0 3 3v48q0 3-3 3H4M56 3H39q-3 0-3 3v48q0 3 3 3h17" />
            <path d="M2 12h14M2 21h14M6 30h10M2 39h14M44 12h14M44 21h14M44 30h10M44 39h14" stroke="#3f60f0" strokeLinecap="butt" />
          </Icon>
        </button>
        <button aria-label="Continuous facing" className={view}>
          <Icon w={60} h={60}>
            <path d="M24 2v20q0 3-3 3H4M36 2v20q0 3 3 3h17M24 58V37q0-3-3-3H4M36 58V37q0-3 3-3h17" />
            <path d="M2 7h14M2 16h14M44 7h14M44 16h14M2 43h14M2 52h14M44 43h14M44 50h14M44 57h14" stroke="#3f60f0" strokeLinecap="butt" />
          </Icon>
        </button>
        <button aria-label="Zoom out" className="flex h-full w-[102px] items-center justify-center">
          <Icon w={46} h={46} sw={3}><circle cx="19" cy="19" r="16" /><path d="M31 31l12 12M12 19h14" /></Icon>
        </button>
        <div className="ml-2 flex h-full w-[342px] rounded-[8px] border-[3px] border-[#c9c9c9] bg-white">
          <input aria-label="Zoom level" defaultValue="50%" className="min-w-0 flex-1 bg-transparent pr-2 text-center outline-none" />
          <button aria-label="Zoom presets" className="flex w-[82px] items-center justify-center border-l-[3px] border-[#d4d4d4] bg-[#fafafa]">
            <Chevron w={42} h={24} sw={4} color="#666" />
          </button>
        </div>
        <button aria-label="Zoom in" className="ml-2 flex h-full w-[99px] items-center justify-center">
          <Icon w={46} h={46} sw={3}><circle cx="19" cy="19" r="16" /><path d="M31 31l12 12M12 19h14M19 12v14" /></Icon>
        </button>
      </div>
    </footer>
  );
}

export default function App() {
  return (
    <div className="relative flex h-screen flex-col overflow-hidden bg-[#fbfbfb] font-['Open_Sans',sans-serif] text-[47px] leading-[64px] text-[#141414]">
      <TitleBar />
      <MenuTabs />
      <Ribbon />
      <main className="flex min-h-0 flex-1">
        <LeftPanel />
        <div className="flex min-w-0 flex-1 flex-col">
          <div className="flex min-h-0 flex-1">
            <DocumentPage />
            <div className="w-[74px] shrink-0 bg-[#f5f5f5] pt-[70px] pr-5 pl-3">
              <div className="h-[932px] rounded-full bg-[#dcdcdc]" />
            </div>
          </div>
          <div className="mr-[74px] h-[75px] shrink-0 bg-[#f4f4f4] pt-[21px] pr-[269px] pl-[280px]">
            <div className="h-[42px] rounded-full bg-[#dcdcdc]" />
          </div>
        </div>
        <RightPanel />
      </main>
      <StatusBar />
      <FixScanDialog />
    </div>
  );
}
